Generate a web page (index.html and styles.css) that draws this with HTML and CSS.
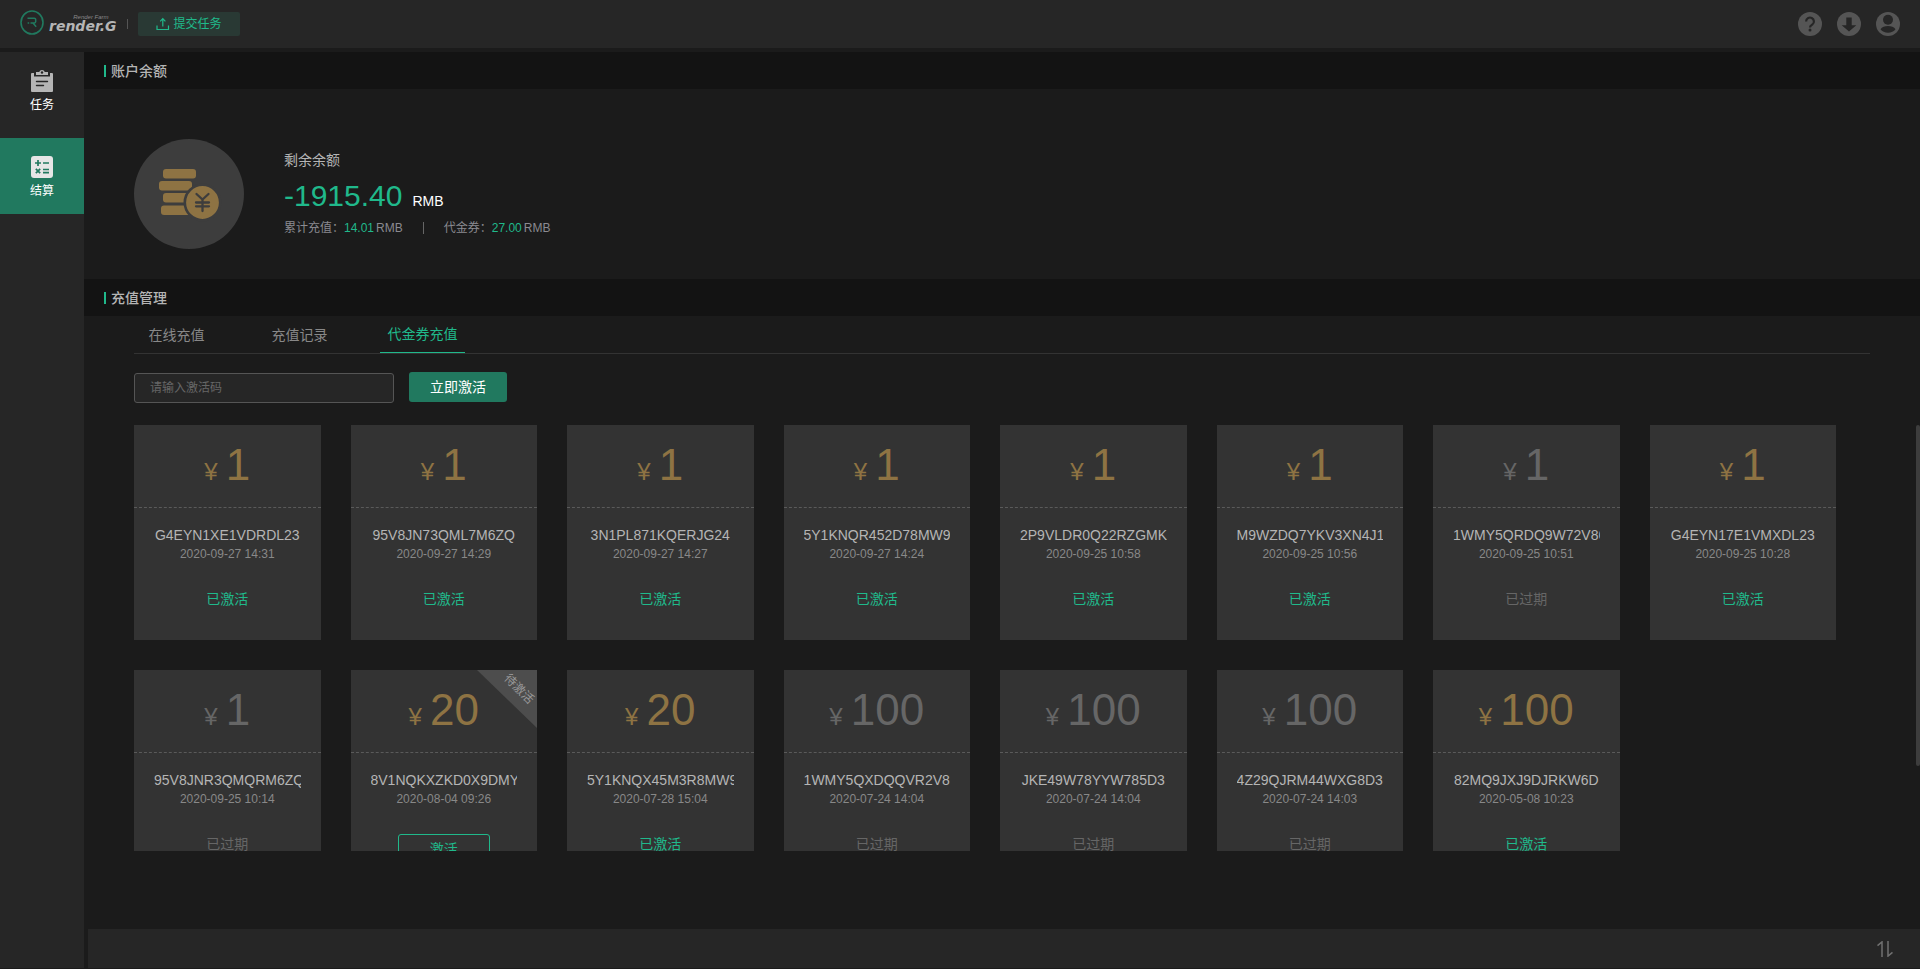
FILE: index.html
```html
<!DOCTYPE html>
<html lang="zh-CN">
<head>
<meta charset="utf-8">
<title>render.G</title>
<link rel="stylesheet" href="styles.css">
</head>
<body>
<div class="app">
  <header class="topbar">
    <a class="logo" href="#" aria-label="render.G">
      <svg class="logo-mark" viewBox="0 0 24 26" width="24" height="26" fill="none" stroke="#21795f">
        <ellipse cx="12" cy="12.500" rx="11" ry="11.500" stroke-width="1.600"/>
        <path d="M7.500 8.200h6.700a1.500 1.500 0 0 1 1.500 1.500v1.800a1.500 1.500 0 0 1-1.500 1.500H10.500M13.200 13.200l3 3.600M7.600 13h1.600" stroke-width="1.500"/>
      </svg>
      <span class="logo-text"><small>Render Farm</small><b>render.G</b></span>
    </a>
    <span class="divider"></span>
    <button class="submit" type="button">
      <svg viewBox="0 0 14 14" width="14" height="14" fill="none" stroke="currentColor" stroke-width="1.200"><path d="M1 8.500v4h11.500v-4M6.800 9.500V1.800M4.200 4.300l2.600-2.600 2.600 2.600"/></svg>
      提交任务
    </button>
    <nav class="tools">
      <button type="button" aria-label="帮助"><svg viewBox="0 0 24 24" width="24" height="24"><circle cx="12" cy="12" r="12" fill="#555"/><path d="M8.100 9.400a3.900 3.900 0 1 1 6.300 3.100c-1.500 1-2.400 1.500-2.400 3" fill="none" stroke="#262626" stroke-width="2.200"/><circle cx="12" cy="18" r="1.500" fill="#262626"/></svg></button>
      <button type="button" aria-label="下载"><svg viewBox="0 0 24 24" width="24" height="24"><circle cx="12" cy="12" r="12" fill="#555"/><path d="M9.300 5.500h5.400v7.700h4.600L12 19.500l-7.300-6.300h4.600z" fill="#262626"/></svg></button>
      <button type="button" aria-label="用户"><svg viewBox="0 0 24 24" width="24" height="24"><circle cx="12" cy="12" r="12" fill="#555"/><circle cx="12" cy="7.800" r="5" fill="#262626"/><path d="M4.500 17.200c2.500-4.200 12.500-4.200 15 0-3 4.600-12 4.600-15 0z" fill="#262626"/></svg></button>
    </nav>
  </header>

  <div class="body">
    <nav class="sidebar">
      <a class="side-item" href="#">
        <svg viewBox="0 0 22 22" width="22" height="22"><path fill="#b5b5b5" d="M1 3h2v3.500h16V3h2a1 1 0 0 1 1 1v17a1 1 0 0 1-1 1H1a1 1 0 0 1-1-1V4a1 1 0 0 1 1-1z"/><path fill="#b5b5b5" d="M5 2h3.200a3 3 0 0 1 5.600 0H17v3H5z"/><circle cx="11" cy="2.500" r="1.200" fill="#262626"/><path stroke="#262626" stroke-width="1.400" stroke-linecap="round" d="M5.500 11.500h11M5.500 15.500h7"/></svg>
        任务
      </a>
      <a class="side-item active" href="#">
        <svg viewBox="0 0 22 22" width="22" height="22"><rect width="22" height="22" rx="3" fill="#e6e6e6"/><path stroke="#21795f" stroke-width="1.700" d="M4 7h6M7 4v6M12 7h6M4.800 12.800l4.400 4.400M9.200 12.800l-4.400 4.400M12 13.500h6M12 16.700h6"/></svg>
        结算
      </a>
    </nav>

    <main class="content">
      <h2 class="section-title">账户余额</h2>
      <section class="account">
        <svg class="coin" viewBox="0 0 110 110" width="110" height="110">
          <circle cx="55" cy="55" r="55" fill="#3d3d3d"/>
          <g fill="#8e7343">
            <rect x="29" y="30" width="33" height="9.500" rx="3"/><rect x="25" y="42" width="33" height="9.500" rx="3"/><rect x="29" y="54" width="33" height="9.500" rx="3"/><rect x="27" y="66.500" width="33" height="9.500" rx="3"/>
            <circle cx="68.500" cy="63.500" r="17.700" stroke="#3d3d3d" stroke-width="2.600"/>
          </g>
          <path d="M62.500 55l6 5.500 6-5.500M68.500 60.500v11.500M62 63.500h13M62 67.300h13" fill="none" stroke="#3d3d3d" stroke-width="2.300" stroke-linecap="round"/>
        </svg>
        <div class="balance">
          <p class="label">剩余余额</p>
          <p class="amount"><strong>-1915.40</strong><span>RMB</span></p>
          <p class="totals"><span>累计充值：<em>14.01</em>RMB</span><i></i><span>代金券：<em>27.00</em>RMB</span></p>
        </div>
      </section>

      <h2 class="section-title">充值管理</h2>
      <section class="recharge">
        <div class="tabs" role="tablist">
          <button type="button" role="tab">在线充值</button>
          <button type="button" role="tab">充值记录</button>
          <button type="button" role="tab" class="active" aria-selected="true">代金券充值</button>
        </div>
        <form class="activate">
          <input type="text" placeholder="请输入激活码" aria-label="激活码">
          <button type="button">立即激活</button>
        </form>
        <div class="voucher-area">
          <div class="scroller">
            <ul class="cards">
              <li class="card"><p class="price"><small>¥</small>1</p><p class="code">G4EYN1XE1VDRDL23</p><time>2020-09-27 14:31</time><p class="status">已激活</p></li>
              <li class="card"><p class="price"><small>¥</small>1</p><p class="code">95V8JN73QML7M6ZQ</p><time>2020-09-27 14:29</time><p class="status">已激活</p></li>
              <li class="card"><p class="price"><small>¥</small>1</p><p class="code">3N1PL871KQERJG24</p><time>2020-09-27 14:27</time><p class="status">已激活</p></li>
              <li class="card"><p class="price"><small>¥</small>1</p><p class="code">5Y1KNQR452D78MW9</p><time>2020-09-27 14:24</time><p class="status">已激活</p></li>
              <li class="card"><p class="price"><small>¥</small>1</p><p class="code">2P9VLDR0Q22RZGMK</p><time>2020-09-25 10:58</time><p class="status">已激活</p></li>
              <li class="card"><p class="price"><small>¥</small>1</p><p class="code">M9WZDQ7YKV3XN4J1</p><time>2020-09-25 10:56</time><p class="status">已激活</p></li>
              <li class="card expired"><p class="price"><small>¥</small>1</p><p class="code">1WMY5QRDQ9W72V86</p><time>2020-09-25 10:51</time><p class="status">已过期</p></li>
              <li class="card"><p class="price"><small>¥</small>1</p><p class="code">G4EYN17E1VMXDL23</p><time>2020-09-25 10:28</time><p class="status">已激活</p></li>
              <li class="card expired"><p class="price"><small>¥</small>1</p><p class="code">95V8JNR3QMQRM6ZQ</p><time>2020-09-25 10:14</time><p class="status">已过期</p></li>
              <li class="card"><span class="ribbon"><span>待激活</span></span><p class="price"><small>¥</small>20</p><p class="code">8V1NQKXZKD0X9DMY</p><time>2020-08-04 09:26</time><button class="use" type="button">激活</button></li>
              <li class="card"><p class="price"><small>¥</small>20</p><p class="code">5Y1KNQX45M3R8MW9</p><time>2020-07-28 15:04</time><p class="status">已激活</p></li>
              <li class="card expired"><p class="price"><small>¥</small>100</p><p class="code">1WMY5QXDQQVR2V8</p><time>2020-07-24 14:04</time><p class="status">已过期</p></li>
              <li class="card expired"><p class="price"><small>¥</small>100</p><p class="code">JKE49W78YYW785D3</p><time>2020-07-24 14:04</time><p class="status">已过期</p></li>
              <li class="card expired"><p class="price"><small>¥</small>100</p><p class="code">4Z29QJRM44WXG8D3</p><time>2020-07-24 14:03</time><p class="status">已过期</p></li>
              <li class="card"><p class="price"><small>¥</small>100</p><p class="code">82MQ9JXJ9DJRKW6D</p><time>2020-05-08 10:23</time><p class="status">已激活</p></li>
            </ul>
          </div>
          <span class="thumb"></span>
        </div>
      </section>

      <footer class="bottombar">
        <button type="button" aria-label="传输列表"><svg viewBox="0 0 16 16" width="16" height="16" fill="none" stroke="#707070" stroke-width="1.500"><path d="M.5 4.600L5 .9V16M15.500 11.400L11 15.100V0"/></svg></button>
      </footer>
    </main>
  </div>
</div>
</body>
</html>
```

FILE: styles.css
```css
* { box-sizing: border-box; margin: 0; padding: 0; }

body {
  background: #1b1b1b;
  color: #b5b5b5;
  font: 14px/20px "Liberation Sans", "Noto Sans CJK SC", sans-serif;
}

button { border: 0; background: none; color: inherit; font: inherit; cursor: pointer; }
a { color: inherit; text-decoration: none; }
ul { list-style: none; }
svg { display: block; }

.app { display: flex; flex-direction: column; height: 100vh; padding-bottom: 1px; }

.topbar {
  display: flex;
  align-items: center;
  height: 48px;
  margin-bottom: 4px;
  padding: 0 20px;
  background: #262626;
}
.logo { display: flex; align-items: center; gap: 5px; height: 26px; margin-bottom: 2px; }
.logo-text { display: flex; flex-direction: column; font-style: italic; color: #b5b5b5; }
.logo-text small { align-self: flex-end; padding-right: 8px; font-size: 6px; line-height: 6px; color: #888; }
.logo-text b { font: italic bold 14px/12px "DejaVu Sans", sans-serif; }
.divider { width: 1px; height: 10px; margin: 0 10px; background: #555; }
.submit {
  display: flex;
  align-items: center;
  justify-content: center;
  gap: 4px;
  width: 102px;
  height: 24px;
  border-radius: 2px;
  background: #293934;
  color: #20b98b;
  font-size: 12px;
}
.tools { display: flex; gap: 15px; margin-left: auto; }

.body { display: flex; flex: 1; min-height: 0; }
.sidebar { display: flex; flex-direction: column; gap: 10px; width: 84px; background: #262626; }
.side-item {
  display: flex;
  flex-direction: column;
  align-items: center;
  gap: 3px;
  height: 76px;
  padding-top: 18px;
  color: #fff;
  font-size: 12px;
}
.side-item.active { background: #21795f; }

.content { display: flex; flex: 1; flex-direction: column; min-width: 0; }
.section-title {
  display: flex;
  align-items: center;
  gap: 5px;
  height: 37px;
  padding-left: 20px;
  background: #131313;
  font-size: 14px;
  font-weight: 500;
}
.section-title::before { content: ""; width: 2px; height: 12px; background: #20b98b; }

.account { display: flex; align-items: center; gap: 40px; height: 190px; padding: 20px 50px 0; }
.amount { display: flex; align-items: baseline; gap: 10px; margin: 11px 0 2px; line-height: 30px; }
.amount strong { color: #20b98b; font-size: 30px; font-weight: 400; }
.amount span { color: #fff; }
.totals { display: flex; align-items: center; color: #8a8a90; font-size: 12px; }
.totals em { margin-right: 2px; color: #20b98b; font-style: normal; }
.totals i { width: 1px; height: 12px; margin: 0 20px; background: #666; }

.recharge { display: flex; flex-direction: column; }
.tabs {
  display: flex;
  gap: 38px;
  height: 38px;
  margin: 0 50px;
  border-bottom: 1px solid #333;
}
.tabs button { width: 85px; color: #888; }
.tabs .active { border-bottom: 1px solid #20b98b; color: #20b98b; }

.activate { display: flex; gap: 15px; padding: 18px 50px 22px; }
.activate input {
  width: 260px;
  height: 30px;
  margin-top: 1px;
  padding: 0 15px;
  border: 1px solid #555;
  border-radius: 3px;
  background: #262626;
  color: #ccc;
  font: inherit;
  font-size: 12px;
}
.activate input::placeholder { color: #666; }
.activate button { width: 98px; height: 30px; border-radius: 3px; background: #21795f; color: #fff; }

.voucher-area { position: relative; }
.scroller { height: 426px; overflow: hidden auto; scrollbar-width: none; }
.thumb {
  position: absolute;
  top: 0;
  right: 0;
  width: 4px;
  height: 80%;
  border-radius: 2px;
  background: #3d3d3d;
}
.cards {
  display: grid;
  grid-template-columns: repeat(8, minmax(0, 1fr));
  gap: 30px;
  padding: 0 84px 72px 50px;
}
.card {
  position: relative;
  height: 215px;
  background: #333;
  text-align: center;
}
.price {
  height: 83px;
  border-bottom: 1px dashed #5a5a5a;
  color: #8e7343;
  font-size: 44px;
  line-height: 80px;
}
.price small { margin-right: 8px; font-size: 24px; }
.code { height: 20px; margin: 17px 20px 0; overflow: hidden; line-height: 20px; }
.card time { display: block; height: 18px; color: #888; font-size: 12px; line-height: 18px; }
.status { margin-top: 26px; color: #20b98b; }
.expired .price, .expired .status { color: #666; }
.use {
  width: 92px;
  height: 30px;
  margin-top: 26px;
  border: 1px solid #20b98b;
  border-radius: 3px;
  color: #20b98b;
}
.ribbon {
  position: absolute;
  top: 0;
  right: 0;
  width: 60px;
  height: 58px;
  background: #4d4d4d;
  clip-path: polygon(0 0, 100% 0, 100% 100%);
}
.ribbon span {
  position: absolute;
  top: 10px;
  right: 0;
  color: #999;
  font-size: 12px;
  line-height: 18px;
  transform: rotate(45deg);
}

.bottombar {
  display: flex;
  align-items: center;
  justify-content: flex-end;
  height: 39px;
  margin: auto 0 0 4px;
  padding-right: 27px;
  background: #262626;
}
```
